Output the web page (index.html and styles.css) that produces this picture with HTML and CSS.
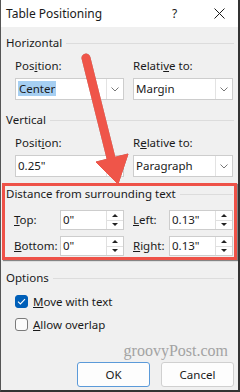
FILE: index.html
```html
<!DOCTYPE html>
<html>
<head>
<meta charset="utf-8">
<link rel="stylesheet" href="styles.css">
</head>
<body>
<div class="dialog">
  <div class="titlebar">
    <span class="title">Table Positioning</span>
    <span class="help">?</span>
    <svg class="close" width="11" height="11" viewBox="0 0 11 11"><path d="M0.5 0.5 L10.5 10.5 M10.5 0.5 L0.5 10.5" stroke="#1a1a1a" stroke-width="1"/></svg>
  </div>
  <div class="content">
    <div class="legend"><span>Horizontal</span><i></i></div>
    <div class="pair">
      <div class="field">
        <div class="lbl">Pos<u>i</u>tion:</div>
        <div class="combo"><span class="val"><span class="sel">Center</span></span><span class="drop"><svg width="8" height="5" viewBox="0 0 8 5"><path d="M0.5 0.5 L4 4 L7.5 0.5" fill="none" stroke="#777" stroke-width="1"/></svg></span></div>
      </div>
      <div class="field">
        <div class="lbl">Relati<u>v</u>e to:</div>
        <div class="combo"><span class="val">Margin</span><span class="drop"><svg width="8" height="5" viewBox="0 0 8 5"><path d="M0.5 0.5 L4 4 L7.5 0.5" fill="none" stroke="#777" stroke-width="1"/></svg></span></div>
      </div>
    </div>
    <div class="legend gap-v"><span>Vertical</span><i></i></div>
    <div class="pair">
      <div class="field">
        <div class="lbl">Posit<u>i</u>on:</div>
        <div class="combo low"><span class="val">0.25"</span><span class="drop"><svg width="8" height="5" viewBox="0 0 8 5"><path d="M0.5 0.5 L4 4 L7.5 0.5" fill="none" stroke="#777" stroke-width="1"/></svg></span></div>
      </div>
      <div class="field">
        <div class="lbl">R<u>e</u>lative to:</div>
        <div class="combo low"><span class="val">Paragraph</span><span class="drop"><svg width="8" height="5" viewBox="0 0 8 5"><path d="M0.5 0.5 L4 4 L7.5 0.5" fill="none" stroke="#777" stroke-width="1"/></svg></span></div>
      </div>
    </div>
    <div class="distance">
      <div class="legend inner"><span>Distance from surrounding text</span><i></i></div>
      <div class="spins">
        <div class="slbl"><u>T</u>op:</div>
        <div class="spin"><span class="val">0"</span><span class="arrows"><span class="up"></span><span class="down"></span></span></div>
        <div class="slbl right"><u>L</u>eft:</div>
        <div class="spin"><span class="val">0.13"</span><span class="arrows"><span class="up"></span><span class="down"></span></span></div>
        <div class="slbl"><u>B</u>ottom:</div>
        <div class="spin"><span class="val">0"</span><span class="arrows"><span class="up"></span><span class="down"></span></span></div>
        <div class="slbl right"><u>R</u>ight:</div>
        <div class="spin"><span class="val">0.13"</span><span class="arrows"><span class="up"></span><span class="down"></span></span></div>
      </div>
    </div>
    <div class="legend gap-o"><span>Options</span><i></i></div>
    <div class="check first"><span class="box on"><svg width="9" height="7" viewBox="0 0 9 7"><path d="M1 3.6 L3.4 6 L8 1.2" fill="none" stroke="#fff" stroke-width="1.1"/></svg></span><span><u>M</u>ove with text</span></div>
    <div class="check"><span class="box"></span><span><u>A</u>llow overlap</span></div>
    <div class="watermark">groovyPost.com</div>
    <div class="buttons">
      <div class="btn ok">OK</div>
      <div class="btn">Cancel</div>
    </div>
  </div>
  <svg class="arrow" width="240" height="392" viewBox="0 0 240 392">
    <line x1="86" y1="58" x2="111" y2="158" stroke="#ef5549" stroke-width="9" stroke-linecap="round"/>
    <polygon points="96,162 128,154 118,184" fill="#ef5549" stroke="#ef5549" stroke-width="1" stroke-linejoin="round"/>
  </svg>
</div>
</body>
</html>
```

FILE: styles.css
```css
* { box-sizing: border-box; }
html, body { margin: 0; padding: 0; }
body {
  width: 240px;
  height: 392px;
  overflow: hidden;
  font-family: "Noto Sans", "Open Sans", sans-serif;
  font-size: 11.5px;
  color: #1a1a1a;
}
u { text-decoration: underline; text-underline-offset: 1px; }
.dialog {
  position: relative;
  width: 240px;
  height: 392px;
  background: #f0f0f0;
  border-left: 1px solid #555;
  border-right: 2px solid #333;
  border-bottom: 2px solid #333;
  display: flex;
  flex-direction: column;
}
.titlebar {
  height: 27px;
  background: #fff;
  display: flex;
  align-items: center;
  padding-left: 5px;
  font-size: 12px;
}
.title { flex: 1; }
.help { width: 12px; margin-right: 30px; font-size: 12px; }
.close { margin-right: 13px; }
.content { flex: 1; display: flex; flex-direction: column; }
.legend {
  display: flex;
  align-items: center;
  height: 16px;
  line-height: 16px;
  margin-top: 8px;
  padding-left: 5px;
  padding-right: 4px;
}
.legend i { flex: 1; height: 1px; background: #dcdcdc; margin-left: 4px; }
.legend.gap-v { margin-top: 12px; }
.legend.inner { margin-top: 0; padding-left: 1px; padding-right: 1px; }
.legend.gap-o { margin-top: 10px; }
.pair {
  display: grid;
  grid-template-columns: 109px 100px;
  column-gap: 9px;
  padding-left: 14px;
  margin-top: 7px;
}
.lbl { height: 16px; line-height: 16px; }
.combo {
  margin-top: 4px;
  height: 22px;
  background: #fff;
  border: 1px solid #cdcdcd;
  display: flex;
  align-items: center;
}
.combo .val { flex: 1; padding-left: 2px; line-height: 16px; }
.sel { background: #a6cff2; padding: 0 1px; }
.combo .drop {
  width: 17px;
  height: 100%;
  border-left: 1px solid #e3e3e3;
  display: flex;
  align-items: center;
  justify-content: center;
}
.distance {
  margin: 6px 1px 0 1px;
  border: 3px solid #ee5248;
  box-shadow: 1px 1px 1px rgba(0,0,0,0.45);
  padding-bottom: 1px;
}
.spins {
  display: grid;
  grid-template-columns: 46px 64px 45px 64px;
  grid-auto-rows: 20px;
  row-gap: 6px;
  padding-left: 9px;
  margin-top: 8px;
}
.slbl { line-height: 20px; }
.slbl.right { padding-left: 9px; }
.spin {
  background: #fff;
  border: 1px solid #cdcdcd;
  display: flex;
}
.spin .val { flex: 1; line-height: 18px; padding-left: 2px; }
.arrows {
  width: 17px;
  border-left: 1px solid #e0e0e0;
  display: flex;
  flex-direction: column;
}
.arrows span {
  flex: 1;
  display: flex;
  align-items: center;
  justify-content: center;
}
.arrows .up { border-bottom: 1px solid #e0e0e0; }
.arrows .up::after {
  content: "";
  border-left: 3px solid transparent;
  border-right: 3px solid transparent;
  border-bottom: 3px solid #222;
}
.arrows .down::after {
  content: "";
  border-left: 3px solid transparent;
  border-right: 3px solid transparent;
  border-top: 3px solid #222;
}
.check {
  display: flex;
  align-items: center;
  height: 16px;
  padding-left: 14px;
  margin-top: 7px;
}
.box {
  width: 13px;
  height: 13px;
  border-radius: 3px;
  border: 1px solid #7a7a7a;
  background: #fbfbfb;
  margin-right: 5px;
  display: flex;
  align-items: center;
  justify-content: center;
}
.box.on { background: #005fb8; border-color: #005fb8; }
.watermark {
  margin-top: 9px;
  align-self: flex-end;
  margin-right: 10px;
  font-family: "Liberation Serif", serif;
  font-size: 16px;
  line-height: 19px;
  color: #a3a3a3;
}
.buttons {
  display: flex;
  justify-content: flex-end;
  gap: 11px;
  padding-right: 4px;
  margin-top: 2px;
}
.btn {
  width: 73px;
  height: 25px;
  border: 1px solid #d0d0d0;
  border-radius: 3px;
  background: #fdfdfd;
  display: flex;
  align-items: center;
  justify-content: center;
}
.btn.ok { border-color: #5b9ad9; }
.arrow {
  position: absolute;
  left: -1px;
  top: 0;
  pointer-events: none;
  filter: drop-shadow(0.5px 0.5px 0.5px rgba(0,0,0,0.35));
}
```
